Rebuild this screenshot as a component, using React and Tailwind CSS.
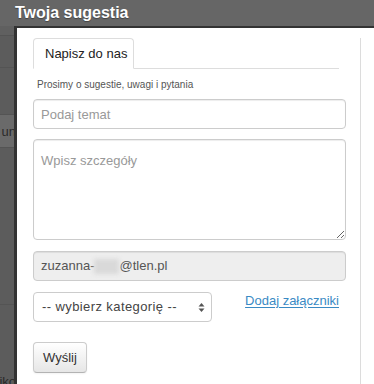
import React from 'react';

const font = { fontFamily: '"Liberation Sans", Arial, sans-serif' };

function SelectArrows() {
  return (
    <svg width="7" height="11" viewBox="0 0 7 11" className="shrink-0">
      <path d="M3.5 1 L6.5 4.5 L0.5 4.5 Z" fill="#555" />
      <path d="M3.5 10 L6.5 6.5 L0.5 6.5 Z" fill="#555" />
    </svg>
  );
}

export default function App() {
  return (
    <div
      className="w-[374px] h-[384px] overflow-hidden bg-[#5c5c5c] flex flex-col"
      style={font}
    >
      <div className="h-[26px] shrink-0 bg-[#666] px-[15px] text-[16px] leading-[26px] font-bold text-white [text-shadow:0_1px_1px_rgba(0,0,0,0.35)]">
        Twoja sugestia
      </div>

      <div className="flex flex-1 min-h-0">
        <div className="w-[14px] shrink-0 flex flex-col text-[13px] text-[#2a2a2a] overflow-hidden">
          <div className="h-[10px] border-b border-[#545454] bg-[#606060]" />
          <div className="h-[32px] border-b border-[#545454]" />
          <div className="h-[47px] border-b border-[#545454]" />
          <div className="h-[33px] bg-[#6a6a6a] border-b border-[#545454] flex items-center justify-end whitespace-nowrap leading-none">
            <span className="-mr-[2px]">un</span>
          </div>
          <div className="h-[157px] border-b border-[#545454]" />
          <div className="flex-1 flex items-end justify-end whitespace-nowrap leading-none">
            <span className="-mb-[4px] -mr-[2px]">iko</span>
          </div>
        </div>

        <div className="flex-1 bg-white border-l-[3px] border-t-[2px] border-[#333]">
          <div className="mt-[10px] w-[344px] h-[400px] border-r border-[#dcdcdc] pl-[16px]">
            <div className="w-[306px] flex border-b border-[#ddd]">
              <div className="h-[31px] -mb-px w-[101px] bg-white border border-b-white border-[#ddd] rounded-t-[4px] flex items-center pl-[11px] text-[13px] text-[#222]">
                Napisz do nas
              </div>
            </div>

            <p className="mt-[9px] pl-[4px] text-[10px] leading-[14px] text-[#555]">
              Prosimy o sugestie, uwagi i pytania
            </p>

            <div className="mt-[7px] w-[313px] flex flex-col gap-[10px]">
              <input
                type="text"
                placeholder="Podaj temat"
                className="h-[30px] w-full rounded-[4px] border border-[#ccc] px-[7px] text-[13px] text-[#555] placeholder:text-[#999] shadow-[inset_0_1px_1px_rgba(0,0,0,0.075)] outline-none"
                style={font}
              />
              <textarea
                placeholder="Wpisz szczegóły"
                className="h-[101px] w-full rounded-[4px] border border-[#ccc] px-[7px] pt-[11px] pb-[6px] text-[13px] text-[#555] placeholder:text-[#999] shadow-[inset_0_1px_1px_rgba(0,0,0,0.075)] outline-none"
                style={font}
              />
              <div className="mt-[1px] h-[30px] w-full rounded-[4px] border border-[#ccc] bg-[#eee] px-[7px] flex items-center text-[13px] text-[#555] shadow-[inset_0_1px_1px_rgba(0,0,0,0.075)]">
                <span>zuzanna-</span>
                <span className="inline-block w-[25px] h-[15px] bg-[#d9d9d9] blur-[2px]" />
                <span>@tlen.pl</span>
              </div>
            </div>

            <div className="mt-[11px] w-[306px] flex items-start justify-between">
              <div className="h-[30px] w-[179px] rounded-[4px] border border-[#ccc] bg-white pl-[8px] pr-[6px] flex items-center justify-between text-[13px] text-[#444]">
                <span className="tracking-[0.4px]">-- wybierz kategorię --</span>
                <SelectArrows />
              </div>
              <a
                href="#"
                className="mt-[1px] text-[13px] leading-[16px] text-[#3a8ac4] underline underline-offset-2"
              >
                Dodaj załączniki
              </a>
            </div>

            <button
              className="mt-[20px] h-[31px] w-[54px] rounded-[4px] border border-[#ccc] border-b-[#b3b3b3] bg-gradient-to-b from-white to-[#e6e6e6] text-[13px] text-[#333] shadow-[0_1px_2px_rgba(0,0,0,0.05)]"
              style={font}
            >
              Wyślij
            </button>
          </div>
        </div>
      </div>
    </div>
  );
}
